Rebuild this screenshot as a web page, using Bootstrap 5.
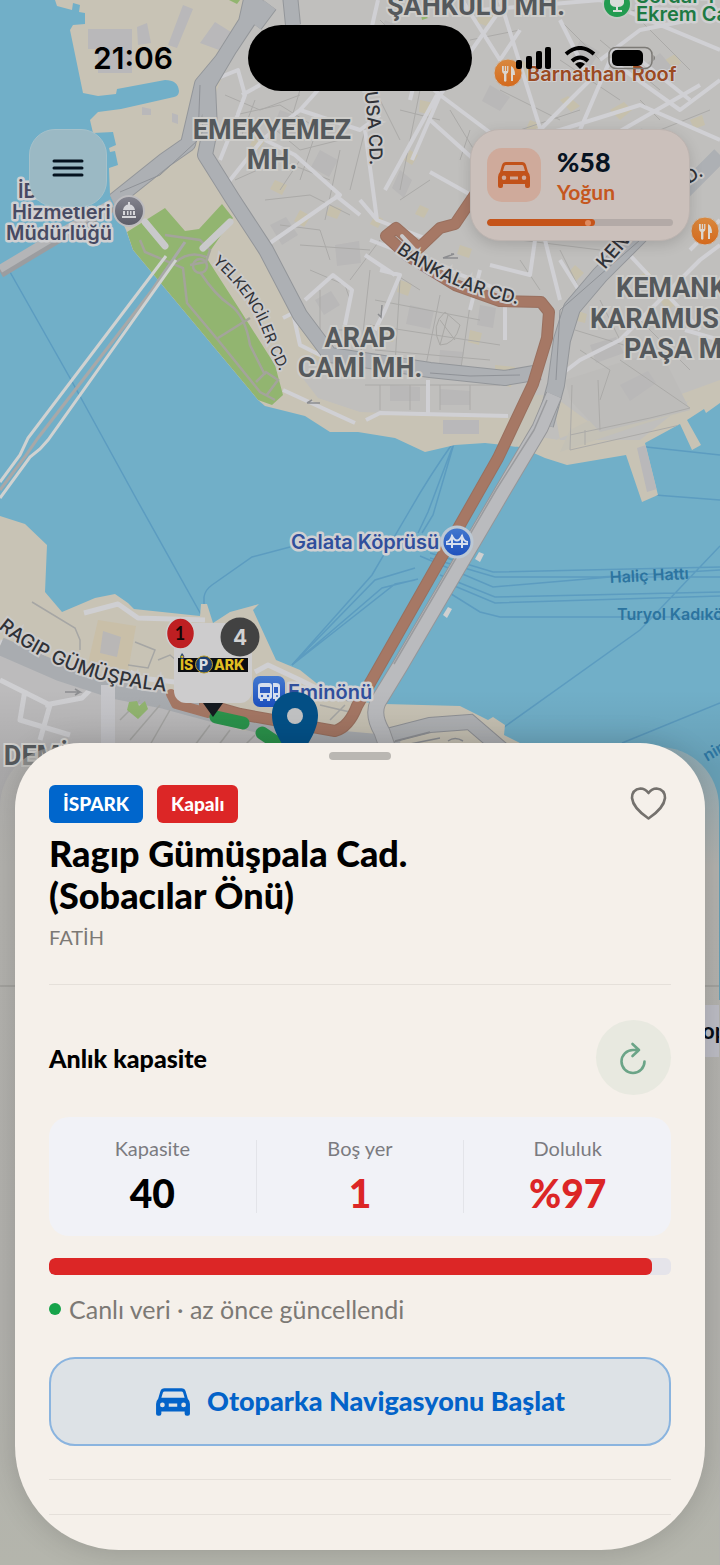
<!DOCTYPE html>
<html lang="tr">
<head>
<meta charset="utf-8">
<meta name="viewport" content="width=device-width, initial-scale=1">
<title>İSPARK – Ragıp Gümüşpala Cad.</title>
<link href="https://cdn.jsdelivr.net/npm/bootstrap@5.3.0/dist/css/bootstrap.min.css" rel="stylesheet">
<style>
  body { background: #b3b2ae; font-family: Lato, "Noto Sans", sans-serif; color: #000; }
  .app { isolation: isolate; }
  .city-map { z-index: -2; top: 0; left: 0; height: auto; }
  .status-row { font-family: Inter, sans-serif; padding: 25px 64px 0 93px; }
  .clock { font-size: 30px; font-weight: 600; line-height: 66px; width: 155px; }
  .island { width: 224px; height: 66px; border-radius: 33px; background: #000; }
  .tools { padding: 38px 30px 0 29px; }
  .menu-btn { width: 78px; height: 78px; border-radius: 26px; background: #9bb9c4; border: 1px solid #a6c1ca; color: #04121f; }
  .density { width: 220px; height: 112px; padding: 18px 16px 14px; border-radius: 30px; border: 1px solid #bdb4b0; background: #cbc0bb; box-shadow: 0 4px 14px rgba(0,0,0,.14); }
  .density-tile { width: 54px; height: 54px; border-radius: 15px; background: #cfaa9b; color: #c2521a; }
  .density-num { font-size: 27px; line-height: 28px; font-weight: 900; color: #071322; }
  .density-word { font-size: 21px; line-height: 32px; font-weight: 700; color: #c5571e; }
  .density .progress { height: 7px; border-radius: 4px; background: #b3aaa7; }
  .density .progress-bar { background: #c5541a; border-radius: 4px; }
  .knob { width: 6px; height: 6px; background: #de8c62; }

  .sheet-area { padding: 0 15px 15px; }
  .sheet-back { z-index: -1; inset: 4px 1px 0 0; border-radius: 60px 60px 0 0; background: linear-gradient(to bottom, rgba(179,178,174,.5), #b3b2ae 120px, #b2b1ad 70%, #b4b5ac); }
  .sheet-back .rule { top: 238px; height: 2px; background: #a3a29e; }
  .chip-behind { top: 258px; right: 0; width: 17px; height: 52px; background: #bcbcc4; font-size: 22px; font-weight: 700; line-height: 52px; color: #070d18; }
  .sheet { background: #f5f0ea; border-radius: 65px 65px 104px 104px; padding: 9px 34px 35px; box-shadow: 0 0 30px rgba(0,0,0,.16); }
  .grabber { width: 62px; height: 8px; border-radius: 4px; background: #bab7b2; margin-bottom: 25px; }
  .tag { height: 38px; line-height: 38px; padding: 0 14px; border-radius: 6px; font-size: 19px; font-weight: 900; color: #fff; }
  .tag-row { gap: 14px; margin-bottom: 9px; }
  .tag-blue { background: #0066cc; }
  .tag-red { background: #dc2626; }
  .heart-btn { color: #74716d; margin-right: 4px; }
  .place { font-size: 36px; line-height: 42px; font-weight: 900; margin-bottom: 6px; }
  .district { font-size: 20px; line-height: 30px; color: #7c7975; margin-bottom: 32px; }
  .hair { height: 1px; background: #e5e0da; }
  .live-head { margin: 35px 0 22px; }
  .section-name { font-size: 25px; font-weight: 900; }
  .refresh-btn { width: 75px; height: 75px; background: #e8e9e0; color: #6ba487; }
  .figures { background: #f1f2f7; border-radius: 20px; padding: 23px 0; margin-bottom: 22px; }
  .figures > div + div { border-left: 1px solid #e3e4e9; }
  .fig-name { font-size: 20px; line-height: 17px; color: #7b7b80; }
  .fig-value { font-size: 39px; line-height: 40px; margin-top: 16px; font-weight: 900; }
  .fig-alert { color: #dc2626; }
  .fill-bar { height: 17px; border-radius: 6px; background: #e5e4ea; margin-bottom: 17px; }
  .fill-bar .progress-bar { background: #dc2626; border-radius: 6px; }
  .live { font-size: 25px; line-height: 34px; color: #7c7975; margin-bottom: 31px; }
  .dot { width: 12px; height: 12px; background: #16a34a; }
  .go-btn { height: 89px; border: 2px solid #8ab4df; border-radius: 26px; background: #dde2e6; color: #0363c9; font-size: 27px; font-weight: 900; margin-bottom: 33px; }
  .go-btn:hover { background: #d3dbe2; color: #0363c9; }
  .hair-low { margin-bottom: 34px; }

  .hood { font: 700 27px Roboto, sans-serif; fill: #55595c; stroke: #cecdca; stroke-width: 4px; paint-order: stroke; text-anchor: middle; }
  .hood-cut { text-anchor: start; }
  .poi { font: 600 20px Inter, sans-serif; stroke: #d0d0d2; stroke-width: 5px; stroke-linejoin: round; paint-order: stroke; }
  .poi-plain { stroke-width: 2px; }
  .street { font: 500 18px Inter, sans-serif; fill: #303237; stroke: #cbcaca; stroke-width: 4px; paint-order: stroke; }
  .street-lg { font-size: 19px; }
  .street-sm { font-size: 15px; font-weight: 400; }
  .ferry { font: 600 16px Inter, sans-serif; fill: #2c749f; }
</style>
</head>
<body>
<div class="app position-relative d-flex flex-column min-vh-100 overflow-hidden">

  <svg class="city-map position-absolute w-100" viewBox="0 0 720 1000" role="img" aria-label="Harita">
    <defs>
      <linearGradient id="orangePin" x1="0" y1="0" x2="0" y2="1"><stop offset="0" stop-color="#d9893f"/><stop offset="1" stop-color="#d4691c"/></linearGradient>
      <linearGradient id="bluePin" x1="0" y1="0" x2="0" y2="1"><stop offset="0" stop-color="#4479cf"/><stop offset="1" stop-color="#1c4fbd"/></linearGradient>
      <linearGradient id="greyPin" x1="0" y1="0" x2="0" y2="1"><stop offset="0" stop-color="#85858f"/><stop offset="1" stop-color="#5b5b67"/></linearGradient>
      <linearGradient id="duskFade" x1="0" y1="0" x2="0" y2="1"><stop offset="0" stop-color="#000" stop-opacity="0"/><stop offset=".25" stop-color="#000" stop-opacity=".1"/><stop offset="1" stop-color="#000" stop-opacity=".1"/></linearGradient>
      <path id="north" d="M55 0L57 6L72 10L73 3L80 5L79 12L85 13V24L73 25L70 30L83 93L98 96L116 94L117 89L165 80Q178 80 179 91Q179 96 174 97L121 109L98 112L90 120L93 133L113 132L116 145L109 148L110 152L115 151L118 165L109 168L110 195L126 230L133 250L258 400L265 406L305 416L330 432H358L395 438L425 452L455 445L485 443L520 447L545 458L567 465L626 455L642 502L658 495L645 443L680 424L692 450L701 445L687 420L704 409L706 413L720 403V0Z"/>
      <path id="south" d="M0 516L25 524L47 545L45 592L62 612L95 598L115 594L128 603L134 609L200 616L201 604H207L213 623L230 612L252 606L259 604L253 610L276 660L300 670L325 690L362 702L385 704L460 706L488 720L493 717L505 725L504 735L530 748V1000H0Z"/>
      <clipPath id="northClip"><use href="#north"/></clipPath>
      <clipPath id="southClip"><use href="#south"/></clipPath>
      <path id="pBank" d="M396 252Q455 296 540 308"/>
      <path id="pYel" d="M212 262Q248 294 262 330T286 382"/>
      <path id="pRag" d="M-2 628Q70 688 190 693"/>
      <path id="pMusa" d="M362 76Q370 125 370 178"/>
      <path id="pKen" d="M605 270L650 218"/>
      <g id="fork" fill="#dcd6ce"><path d="M-6-7v5q0 2 2 3v7q1.200 1.500 2.400 0V1q2-1 2-3v-5h-1.300v5h-1V-7h-1.300v5h-1V-7zM3 8V-7q4 2 4 9H5v6z"/></g>
    </defs>

    <rect width="720" height="1000" fill="#71afc8"/>
    <!-- ferry lines -->
    <g fill="none" stroke="#5c9cc0" stroke-width="1.500">
      <path d="M10 272L70 378L137 500L203 618M204 613V597Q205 590 212 585L252 557L290 547M455 440Q430 475 410 510L372 575L292 665M455 440L428 512L418 533M455 440L433 515L422 533"/>
      <path d="M430 553L493 572L720 567M430 558L495 577H600L720 570M420 556L493 587L610 577H720M440 575L495 597L720 592M445 582L495 603L720 596M440 587L480 612L500 617H720M292 665L375 580L415 568M292 665L382 588L418 579M292 665L395 584L415 580M500 730L640 630L720 546M622 743L720 703M637 446L720 455M655 495L720 500"/>
    </g>
    <use href="#north" fill="#c8c3b5"/>
    <use href="#south" fill="#c8c3b5"/>

    <g clip-path="url(#northClip)">
      <path d="M252 0L215 95L205 140L250 220L320 345L298 372L318 398L360 412L520 418L505 432L560 440L552 395L600 430L680 405L690 400L640 440L555 440L720 380V0Z" fill="#c0bfbd"/>
      <path d="M570 430L600 415L672 378L690 410L640 425L560 452Z" fill="#c4c1b6"/>
      <path d="M565 380L660 350L690 410L600 432L570 400Z" fill="#bdbcba"/>
      <path d="M528 395L510 430L495 450L515 448L538 420L545 395Z" fill="#c4c1b6"/>
      <g fill="#b9b8ba"><path d="M88 29h44v20H88zM98 49h34v24H98zM183 5l10 4-16 39-9-3zM137 27l10-4 4 20-13 2zM215 22l16 10-12 18-19-7zM142 107l9 2v6h-9zM172 113l6 2v9l-6-2zM443 420h36v14h-36zM637 448l12-4 8 45-10 3z"/></g>
      <g fill="#c6c0ac"><path d="M330 205l12 4-5 10-11-4zM420 100l14 3-2 12-13-3zM520 60l20 8-8 10-16-8zM610 110l14-8 8 8-12 10zM470 330l12 3-3 12-11-3zM560 100l8-4 12 10-9 6zM310 350l12-4 8 10-12 6zM495 365l20 2-4 20-15-3zM400 280l12 4-4 12-11-4zM660 300l10-5 6 10-10 5zM300 210l11 6-7 11-10-6zM480 10l15 6-6 11-13-5zM255 135l10 6-6 9-9-5zM275 180l12 5-5 10-12-6zM400 60l10 5-6 9-9-5zM455 60l12 3-3 10-12-3zM410 150l8 5-6 10-8-5zM375 215l8 4-5 9-8-4zM575 265l9 8-8 8-8-8zM600 200l9-6 7 8-9 7zM665 60l10-6 6 9-9 6zM690 120l12-5 3 10-11 4zM530 120l10 4-3 9-11-4zM610 215l8-4 5 8-8 5zM460 245l12 4-3 9-12-4zM420 205l9 4-5 9-9-4zM385 330l10 2-2 10-10-2zM575 310l12 4-2 9-12-3zM640 275l9-4 5 8-9 5z"/></g>
      <g fill="#b9b8b8"><path d="M280 110l22 8-8 20-22-9zM320 150l18 10-9 17-18-10zM335 245l24-4 2 22-24 3zM270 225l16-8 12 18-16 10zM410 305l24 6-4 18-24-5zM480 305l16 3-3 20-16-3zM440 350l24 2-3 14-22-3zM540 145l26-8 6 14-24 9zM580 40l20 12-10 15-18-10zM620 140l22-12 8 14-21 12zM645 65l15-12 12 14-15 12zM490 85l20 12-10 14-18-10zM400 170l12 10-8 18-12-10zM590 345l26-8 8 16-28 10zM620 385l28-14 8 12-26 18zM315 300l16-9 9 14-16 10zM390 385l30 2v14h-30zM440 389l30 2v14h-30zM500 205l28 5-3 25-27-5zM385 20l22 10-8 16-20-9z"/></g>
      <!-- park -->
      <path d="M127 232L165 208L185 231L199 229L222 204L233 218L206 257L240 310L275 365L283 395L272 405L258 400L133 250Z" fill="#92b570"/>
      <path d="M229 0L237 4L240 0Z" fill="#92b570"/>
      <path d="M420 10l8 8-6 2z" fill="#92b570"/>
      <g fill="none" stroke="#a4a49b" stroke-width="2.500">
        <path d="M140 240L145 252L183 268L187 303L218 340L260 392L275 400M165 235L200 240L210 250L206 262L190 265M176 262Q190 250 206 257M218 338L250 318M200 272Q215 295 230 305T250 345L265 375M256 382L266 372L278 380L266 396"/>
        <circle cx="200" cy="266" r="7"/>
      </g>
      <path d="M145 222L165 246M203 248L230 222" stroke="#c9c9cb" stroke-width="7" stroke-linecap="round"/>
      <!-- building edges -->
      <g fill="none" stroke="#abaaa8" stroke-width="1">
        <path d="M225 95L260 110L300 95M235 115L280 105L320 130M270 125L300 150L340 140M235 180L280 160L330 180M265 200L310 195L350 215M280 225L320 230L330 260M300 245L370 250M310 270L345 285L350 300M255 100L240 140M300 90L285 140M320 120L300 180M340 150L325 220M365 130L350 190M380 100L400 140M400 110L440 120M420 90L400 190M450 110L480 160M500 90L560 120M520 130L580 110M560 60L620 100M600 40L660 90M640 20L690 70M560 20L600 60M470 40L520 30M380 20L420 60M420 40L470 70M660 130L710 110M640 100L660 120M365 255L420 290M375 300L480 320M370 270L360 360M400 280L395 365M440 295L425 370M470 305L460 375M370 325L500 345M375 350L490 360M520 260L540 290M560 250L580 290M520 240L600 250M380 240L350 280M575 330L640 350M600 300L620 340M640 320L690 370M580 350L610 370L600 400M620 360L690 408M570 435L650 418L690 408M572 385L570 450L680 425M598 380L600 430M585 430V445M365 385H500M380 385V410M410 385V410M440 385V410M470 385V410M320 290V330M330 330H360M285 290L310 320M460 160L470 130M620 15L650 5M300 160L280 190M430 180L400 200"/>
      </g>
      <path d="M440 345Q430 325 445 312L460 325Q455 345 440 345M440 320L455 340M448 315L440 345" fill="none" stroke="#aaa9a6"/>
      <!-- side streets -->
      <g fill="none" stroke="#d0d0d4" stroke-width="4" stroke-linejoin="round">
        <path d="M218 78L238 70L245 95L232 130L220 160M227 184L262 140L300 110L318 90M265 140L295 155L340 195L332 200L270 243M335 195L360 215M242 95L260 85M300 110L360 130L380 115M232 192L300 325L310 330M305 300L333 275L352 290L345 325M283 318L293 313L300 345L350 370M283 390L355 423M366 420L380 413L508 416M428 413V380M412 160L440 95L500 10M440 95L500 140L540 130L590 80L560 20M440 95L385 45M500 0L540 128M385 190L437 95M365 130L377 220L430 240M377 220L360 200M430 120L480 165M462 0L500 60L520 30M580 130L610 60L680 110L720 80M570 160L700 85M640 60L690 100M600 60L640 30L690 20M560 260L585 300M490 265L530 275L535 240M560 300L545 240M380 270L400 275L385 310L375 330M480 270L470 310M505 300V340M365 255L395 275M370 240L500 290M563 373L580 360L620 340L700 260L720 245M625 250L700 330M685 330L720 340M690 250L720 220M395 45L420 60L410 100M345 30L370 35L378 0M430 172L480 200M520 140L560 130L640 105L720 140M480 10L600 0L720 50"/>
      </g>
      <!-- main roads -->
      <g fill="none" stroke-linejoin="round">
        <path d="M0 268L60 232L110 204L165 160L188 144L202 84L222 60L246 22L252 -5M262 0L230 48L208 85L210 130L205 155L232 198L266 250L300 315L330 355L430 370L505 378L540 372M255 25L270 5M290 -5L293 25" stroke="#93969a" stroke-width="16"/>
        <path d="M640 235L600 275L572 308L562 340L556 385L545 425" stroke="#93969a" stroke-width="18"/>
        <path d="M0 268L60 232L110 204L165 160L188 144L202 84L222 60L246 22L252 -5M262 0L230 48L208 85L210 130L205 155L232 198L266 250L300 315L330 355L430 370L505 378L540 372M255 25L270 5M290 -5L293 25" stroke="#adb0b4" stroke-width="14"/>
        <path d="M720 155L640 235L600 275L572 308L562 340L556 385L545 425" stroke="#adb0b4" stroke-width="16"/>
        <path d="M200 85L198 140L160 175L120 192M430 373L470 376L520 375M640 240L560 310L556 380" stroke="#8f9297" stroke-width="1"/>
      </g>
      <path d="M443 258l11-4-3 0M443 258h15M382 305l-1 12-3-3M307 403h13M307 403l5-3" stroke="#8c8d90" stroke-width="1.500" fill="none"/>
    </g>
    <path d="M0 272L60 236L112 206" fill="none" stroke="#9b9da0" stroke-width="12"/>
    <path d="M0 269L60 233L112 203" fill="none" stroke="#b4b5b7" stroke-width="8"/>
    <!-- metro bridge -->
    <g fill="none">
      <path d="M185 242L150 293L38 438L24 458L0 490" stroke="#a8a8a8" stroke-width="3"/>
      <path d="M166 256L28 438L20 455L0 482M176 260L48 440L40 449L30 457L0 498" stroke="#d0d2d1" stroke-width="3"/>
    </g>

    <g clip-path="url(#southClip)">
      <path d="M0 650L100 690L240 730L400 750V1000H0Z" fill="#bcbbbc"/>
      <path d="M98 620l38 6-8 45-40-8z" fill="#c9bfa8"/>
      <path d="M103 631l18 6-4 20-17-4z" fill="#b9b7b6"/>
      <g fill="none" stroke="#cfcfd2" stroke-width="5" stroke-linejoin="round">
        <path d="M84 613L118 604L138 618L205 620M0 642L40 655L90 690M255 672L268 665L300 680L340 700M130 672L140 678L175 682M0 680L50 705L40 740M25 690L20 720L70 735M80 680L92 688L82 698L45 705"/>
      </g>
      <path d="M0 646L60 672L115 690L165 700L220 715L320 738L400 745" fill="none" stroke="#a9acb0" stroke-width="18"/>
      <path d="M108 685V745" stroke="#c6c6ca" stroke-width="14"/>
      <g fill="none" stroke="#a6a6a4" stroke-width="1.500">
        <path d="M32 602L75 628L80 640V650M135 642L155 650L148 668L128 665M158 660L170 655L190 672M320 705L350 712L355 695M330 720L345 705M320 695L355 702M120 720L140 700M210 725L195 745M230 730L215 750M255 735L240 750M130 740L160 705M170 710L150 745"/>
      </g>
      <path d="M129 702l8-1 2 5 6-5 3 8-10 10-11-9z" fill="#92b570"/>
      <path d="M387 736L430 725L470 722L505 752" fill="none" stroke="#909296" stroke-width="16"/>
      <path d="M387 736L430 725L470 722L505 752" fill="none" stroke="#b0b2b5" stroke-width="14"/>
      <path d="M395 741L430 732M405 745L440 738M448 741Q455 736 463 741" fill="none" stroke="#8f9195" stroke-width="1.500"/>
      <path d="M65 692h15l-5-3M80 692l-5 3" fill="none" stroke="#8c8d90" stroke-width="1.500"/>
    </g>
    <!-- Galata bridge -->
    <g fill="none" stroke-linejoin="round">
      <path d="M554 395L540 428L502 492L400 666L378 702Q372 715 382 732L390 755" stroke="#959699" stroke-width="17"/>
      <path d="M554 395L540 428L502 492L400 666L378 702Q372 715 382 732L390 755" stroke="#babbbe" stroke-width="15"/>
      <path d="M547 400L534 430L496 490L394 664" stroke="#9a9b9e" stroke-width="1.500"/>
    </g>
    <g fill="#cfd0d0"><path d="M479 552l5 2-4 8-5-3zM418 592l4 2-4 8-4-3zM448 607l4 2-5 9-4-3z"/></g>

    <!-- route -->
    <g fill="none" stroke-linejoin="round" stroke-linecap="round">
      <path d="M478 190L455 224L440 228L419 248L396 228L386 236L408 256L455 285L500 301L541 302L549 312L547 338L533 384L498 458L357 706Q349 727 335 731L240 714L205 704" stroke="#99705f" stroke-width="12"/>
      <path d="M478 190L455 224L440 228L419 248L396 228L386 236L408 256L455 285L500 301L541 302L549 312L547 338L533 384L498 458L357 706Q349 727 335 731L240 714L205 704M171 694L176 704L208 713" stroke="#a67865" stroke-width="10"/>
      <path d="M402 236L414 249" stroke="#c9c9cb" stroke-width="4"/>
      <path d="M216 717L243 723M262 733L280 745" stroke="#2b954c" stroke-width="13"/>
    </g>
    <rect y="690" width="720" height="310" fill="url(#duskFade)"/>

    <!-- neighbourhoods -->
    <text class="hood"><tspan x="272" y="139">EMEKYEMEZ</tspan><tspan x="272" y="169">MH.</tspan></text>
    <text class="hood"><tspan x="360" y="347">ARAP</tspan><tspan x="360" y="377">CAMİ MH.</tspan></text>
    <text class="hood" x="476" y="15">ŞAHKULU MH.</text>
    <text class="hood hood-cut"><tspan x="616" y="297">KEMANK</tspan><tspan x="590" y="328">KARAMUS</tspan><tspan x="624" y="358">PAŞA M</tspan></text>
    <text class="hood" x="36" y="765">DEMİ</text>
    <!-- streets -->
    <text class="street"><textPath href="#pBank">BANKALAR CD.</textPath></text>
    <text class="street street-sm"><textPath href="#pYel">YELKENCİLER CD.</textPath></text>
    <text class="street street-lg"><textPath href="#pRag">RAGIP GÜMÜŞPALA</textPath></text>
    <text class="street"><textPath href="#pMusa">MUSA CD.</textPath></text>
    <text class="street street-lg"><textPath href="#pKen">KEN</textPath></text>
    <text class="street" transform="rotate(-30 695 177)" x="686" y="180">D.</text>
    <text class="ferry" transform="rotate(-3 610 583)" x="610" y="583">Haliç Hattı</text>
    <text class="ferry" x="617" y="620">Turyol Kadıkö</text>
    <text class="ferry" transform="rotate(-30 706 760)" x="706" y="762">nin</text>
    <!-- places -->
    <text class="poi" fill="#474a63"><tspan x="18" y="198">İBB Mez</tspan><tspan x="12" y="219">Hizmetleri</tspan><tspan x="6" y="240">Müdürlüğü</tspan></text>
    <g transform="translate(129 211)"><circle r="15" fill="url(#greyPin)" stroke="#bdbcbf" stroke-width="2"/><path d="M-7 7h14v-2H-7zM-6 4h2v-4h-2zM-2 4h1.500V0H-2zM1 4h1.500V0H1zM4 4h2V0H4zM-6-1H6Q5-6 1-6.500V-9h-2v2.500Q-5-6-6-1z" fill="#d6d6da"/></g>
    <text class="poi" fill="#1d7a43"><tspan x="636" y="3">Serdar-ı</tspan><tspan x="636" y="21">Ekrem Ca</tspan></text>
    <g transform="translate(617 4)"><circle r="14" fill="#229b50" stroke="#c3c8c3" stroke-width="2"/><path d="M-7-4Q-8 3-1 3V6H-4V8H5V6H1V3Q8 3 7-4Z" fill="#d8ddd8"/></g>
    <text class="poi poi-plain" x="527" y="81" fill="#9b4a22">Barnathan Roof</text>
    <g transform="translate(508 73)"><circle r="14" fill="url(#orangePin)" stroke="#c8beb4"/><use href="#fork"/></g>
    <g transform="translate(705 231)"><circle r="14" fill="url(#orangePin)" stroke="#c8beb4"/><use href="#fork"/></g>
    <text class="poi" x="291" y="549" fill="#304f9c">Galata Köprüsü</text>
    <g transform="translate(457 542)"><circle r="15" fill="url(#bluePin)" stroke="#bcc8d4" stroke-width="3"/><path d="M-11 2H11M-5-7V6M5-7V6M-11 0Q-7 0-5-6Q0 3 5-6Q7 0 11 0" fill="none" stroke="#d7dfed" stroke-width="2"/></g>
    <text class="poi" x="288" y="699" fill="#304f9c">Eminönü</text>
    <g transform="translate(253 676)"><rect width="32" height="31" rx="7" fill="url(#bluePin)"/><path d="M9 7h7q3 0 3 3v11q0 2-2 2v2h-3v-2h-4v2H7v-2q-2 0-2-2V10q0-3 4-3M20 7h3q4 0 4 3v11q0 2-2 2v2h-3v-2h-2z" fill="#d5deee"/><path d="M7 11h10v6H7zM21 11h4v6h-4z" fill="#2b5cc4"/><circle cx="9" cy="20" r="1.200" fill="#2b5cc4"/><circle cx="15" cy="20" r="1.200" fill="#2b5cc4"/><circle cx="24" cy="20" r="1" fill="#2b5cc4"/></g>
    <!-- car park marker -->
    <path d="M203 703H223L213 717Z" fill="#14191f"/>
    <rect x="174" y="623" width="78" height="80" rx="12" fill="#cdcccd"/>
    <rect x="178" y="658" width="70" height="14" fill="#0b0d10"/>
    <circle cx="204" cy="664.500" r="8.500" fill="#1d3f70" stroke="#b89b2c"/>
    <path d="M182 653q4 4 1 6h-2q-2-2 1-6" fill="#2d4a72"/>
    <g font-family="Inter, sans-serif" font-weight="800" font-size="14" fill="#e0be22"><text x="180" y="670">İS</text><text x="199" y="670" fill="#d9dde2">P</text><text x="214" y="670">ARK</text></g>
    <ellipse cx="180.500" cy="633.500" rx="14" ry="15.500" fill="#be1f22" stroke="#cfcfcf" stroke-width="1.500"/>
    <text x="180" y="640" text-anchor="middle" font-family="Lato, sans-serif" font-weight="700" font-size="18" fill="#160606">1</text>
    <circle cx="240" cy="637" r="19.500" fill="#424242"/>
    <text x="240" y="645" text-anchor="middle" font-family="Inter, sans-serif" font-weight="700" font-size="21" fill="#d2d2d2">4</text>
    <path d="M295 692C281 692 272 702 272 715C272 732 284 746 295 765C306 746 318 732 318 715C318 702 309 692 295 692Z" fill="#034f85"/>
    <circle cx="295" cy="716" r="8" fill="#bfc0c1"/>
  </svg>

  <header>
    <div class="status-row d-flex align-items-center">
      <div class="clock">21:06</div>
      <div class="island flex-shrink-0"></div>
      <div class="d-flex align-items-center ms-auto gap-2">
        <svg width="38" height="24" viewBox="0 0 38 24" aria-hidden="true"><rect y="14" width="6" height="9" rx="2"/><rect x="10" y="10" width="6" height="13" rx="2"/><rect x="20" y="5" width="6" height="18" rx="2"/><rect x="29" y="1" width="6" height="22" rx="2"/></svg>
        <svg width="36" height="24" viewBox="0 0 36 24" aria-hidden="true"><g fill="none" stroke="#000" stroke-width="4"><path d="M4 8Q18-4 32 8M10 15Q18 8 26 15"/></g><path d="M13 18Q18 14 23 18L18 23Z"/></svg>
        <svg width="50" height="24" viewBox="0 0 50 24" aria-hidden="true"><rect x="3" y="1.500" width="43" height="21" rx="7" fill="none" stroke="#7c7a76" stroke-width="1.500"/><rect x="6" y="4" width="31" height="16" rx="5"/><path d="M47.500 9q3 3 0 6z" fill="#7c7a76"/></svg>
      </div>
    </div>
    <div class="tools d-flex justify-content-between align-items-start">
      <button class="menu-btn d-flex align-items-center justify-content-center p-0" type="button" aria-label="Menü">
        <svg width="32" height="20" viewBox="0 0 32 20" aria-hidden="true"><path d="M2 3H30M2 10H30M2 17H30" stroke="currentColor" stroke-width="3" stroke-linecap="round"/></svg>
      </button>
      <div class="density d-flex flex-column justify-content-between">
        <div class="d-flex gap-3">
          <div class="density-tile d-flex align-items-center justify-content-center">
            <svg width="34" height="28" viewBox="0 0 34 28" aria-hidden="true"><path fill="currentColor" fill-rule="evenodd" d="M9 1H25Q28 1 29 4L31 11Q33 13 33 16V25Q33 27 31 27H30Q28 27 28 25V23H6V25Q6 27 4 27H3Q1 27 1 25V16Q1 13 3 11L5 4Q6 1 9 1ZM9 4Q8 4 7.500 5L6 10H28L26.500 5Q26 4 25 4ZM7 14.500A2.200 2.200 0 1 0 7 19A2.200 2.200 0 1 0 7 14.500ZM27 14.500A2.200 2.200 0 1 0 27 19A2.200 2.200 0 1 0 27 14.500ZM13 15.500V18.500H21V15.500Z"/></svg>
          </div>
          <div><div class="density-num">%58</div><div class="density-word">Yoğun</div></div>
        </div>
        <div class="progress" role="progressbar" aria-label="Yoğunluk" aria-valuenow="58" aria-valuemin="0" aria-valuemax="100">
          <div class="progress-bar d-flex flex-row align-items-center justify-content-end" style="width:58%"><span class="knob rounded-circle me-1"></span></div>
        </div>
      </div>
    </div>
  </header>

  <main class="sheet-area position-relative mt-auto">
    <div class="sheet-back position-absolute overflow-hidden" aria-hidden="true">
      <div class="rule position-absolute w-100"></div>
      <div class="chip-behind position-absolute">op</div>
    </div>
    <section class="sheet">
      <div class="grabber mx-auto"></div>
      <div class="tag-row d-flex align-items-center">
        <span class="tag tag-blue">İSPARK</span>
        <span class="tag tag-red">Kapalı</span>
        <button class="heart-btn btn border-0 p-0 ms-auto d-flex" type="button" aria-label="Favorilere ekle">
          <svg width="37" height="34" viewBox="0 0 37 34" aria-hidden="true"><path d="M18.500 6Q15 1.500 10.500 1.500Q2 2.500 2 11Q3 21 18.500 31.500Q34 21 35 11Q35 2.500 26.500 1.500Q22 1.500 18.500 6Z" fill="none" stroke="currentColor" stroke-width="2.600" stroke-linejoin="round"/></svg>
        </button>
      </div>
      <h1 class="place">Ragıp Gümüşpala Cad.<br>(Sobacılar Önü)</h1>
      <p class="district">FATİH</p>
      <div class="hair"></div>
      <div class="live-head d-flex justify-content-between align-items-center">
        <h2 class="section-name mb-0">Anlık kapasite</h2>
        <button class="refresh-btn btn rounded-circle border-0 p-0 d-flex align-items-center justify-content-center" type="button" aria-label="Yenile">
          <svg width="32" height="34" viewBox="0 0 32 34" aria-hidden="true"><path d="M21 9H15A11.500 11.500 0 1 0 26.500 20.500M14.500 3L21 9L14.500 15" fill="none" stroke="currentColor" stroke-width="2.600" stroke-linecap="round" stroke-linejoin="round"/></svg>
        </button>
      </div>
      <div class="figures row g-0 text-center">
        <div class="col"><div class="fig-name">Kapasite</div><div class="fig-value">40</div></div>
        <div class="col"><div class="fig-name">Boş yer</div><div class="fig-value fig-alert">1</div></div>
        <div class="col"><div class="fig-name">Doluluk</div><div class="fig-value fig-alert">%97</div></div>
      </div>
      <div class="fill-bar progress" role="progressbar" aria-label="Doluluk" aria-valuenow="97" aria-valuemin="0" aria-valuemax="100">
        <div class="progress-bar" style="width:97%"></div>
      </div>
      <div class="live d-flex align-items-center gap-2"><span class="dot rounded-circle"></span>Canlı veri · az önce güncellendi</div>
      <button class="go-btn btn w-100 d-flex align-items-center justify-content-center gap-3" type="button">
        <svg width="36" height="30" viewBox="0 0 34 28" aria-hidden="true"><path fill="currentColor" fill-rule="evenodd" d="M9 1H25Q28 1 29 4L31 11Q33 13 33 16V25Q33 27 31 27H30Q28 27 28 25V23H6V25Q6 27 4 27H3Q1 27 1 25V16Q1 13 3 11L5 4Q6 1 9 1ZM9 4Q8 4 7.500 5L6 10H28L26.500 5Q26 4 25 4ZM7 14.500A2.200 2.200 0 1 0 7 19A2.200 2.200 0 1 0 7 14.500ZM27 14.500A2.200 2.200 0 1 0 27 19A2.200 2.200 0 1 0 27 14.500ZM13 15.500V18.500H21V15.500Z"/></svg>
        Otoparka Navigasyonu Başlat
      </button>
      <div class="hair hair-low"></div>
      <div class="hair"></div>
    </section>
  </main>
</div>
<script src="https://cdn.jsdelivr.net/npm/bootstrap@5.3.0/dist/js/bootstrap.bundle.min.js"></script>
</body>
</html>
